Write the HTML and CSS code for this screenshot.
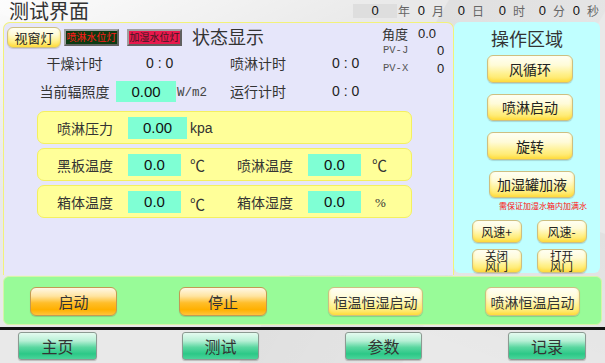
FILE: index.html
```html
<!DOCTYPE html>
<html lang="zh-CN">
<head>
<meta charset="utf-8">
<title>测试界面</title>
<link rel="stylesheet" href="styles.css">
</head>
<body>
<header class="topbar">
  <h1 class="title">测试界面</h1>
  <div class="clock">
    <span class="num yearbox">0</span><span class="unit">年</span>
    <span class="num w22">0</span><span class="unit">月</span>
    <span class="num w28">0</span><span class="unit">日</span>
    <span class="num w29">0</span><span class="unit">时</span>
    <span class="num w28">0</span><span class="unit">分</span>
    <span class="num w22">0</span><span class="unit">秒</span>
  </div>
</header>

<div class="main">
  <section class="status">
    <div class="status-top">
      <div class="status-main">
        <div class="row row1">
          <button class="btn-y lamp-btn">视窗灯</button>
          <span class="lamp lamp-green">喷淋水位灯</span>
          <span class="lamp lamp-red">加湿水位灯</span>
          <span class="status-title">状态显示</span>
        </div>
        <div class="row info-row">
          <span class="lbl">干燥计时</span>
          <span class="cell2"><span class="timer t1">0 : 0</span></span>
          <span class="lbl3">喷淋计时</span>
          <span class="timer">0 : 0</span>
        </div>
        <div class="row info-row">
          <span class="lbl">当前辐照度</span>
          <span class="cell2"><span class="vbox vbox-irr">0.00</span><span class="mono-unit">W/m2</span></span>
          <span class="lbl3">运行计时</span>
          <span class="timer">0 : 0</span>
        </div>
      </div>
      <div class="gauge">
        <div class="g-line g1"><span class="g-lbl">角度</span><span class="g-val">0.0</span></div>
        <div class="g-line g2"><span class="pv">PV-J</span><span class="pv-val">0</span></div>
        <div class="g-line g3"><span class="pv">PV-X</span><span class="pv-val">0</span></div>
      </div>
    </div>

    <div class="yrows">
      <div class="yrow">
        <span class="y-lbl">喷淋压力</span>
        <span class="y-box"><span class="vbox wide">0.00</span></span>
        <span class="y-unit kpa">kpa</span>
      </div>
      <div class="yrow">
        <span class="y-lbl">黑板温度</span>
        <span class="y-box"><span class="vbox">0.0</span></span>
        <span class="y-unit">℃</span>
        <span class="y-lbl2">喷淋温度</span>
        <span class="y-box2"><span class="vbox">0.0</span></span>
        <span class="y-unit2">℃</span>
      </div>
      <div class="yrow">
        <span class="y-lbl">箱体温度</span>
        <span class="y-box"><span class="vbox">0.0</span></span>
        <span class="y-unit low">℃</span>
        <span class="y-lbl2">箱体湿度</span>
        <span class="y-box2"><span class="vbox">0.0</span></span>
        <span class="y-unit2 pct">%</span>
      </div>
    </div>
  </section>

  <aside class="ops">
    <h2 class="ops-title">操作区域</h2>
    <button class="btn-y op-btn">风循环</button>
    <button class="btn-y op-btn">喷淋启动</button>
    <button class="btn-y op-btn">旋转</button>
    <button class="btn-y op-btn">加湿罐加液</button>
    <p class="warn">需保证加湿水箱内加满水</p>
    <div class="small-grid">
      <button class="btn-y sm-btn">风速+</button>
      <button class="btn-y sm-btn">风速-</button>
      <button class="btn-y sm-btn two">关闭<br>风门</button>
      <button class="btn-y sm-btn two">打开<br>风门</button>
    </div>
  </aside>
</div>

<div class="actions">
  <button class="btn-o act a1">启动</button>
  <button class="btn-o act a2">停止</button>
  <button class="btn-y act a3">恒温恒湿启动</button>
  <button class="btn-y act a4">喷淋恒温启动</button>
</div>

<div class="divider"></div>

<nav class="nav">
  <button class="btn-g n1">主页</button>
  <button class="btn-g n2">测试</button>
  <button class="btn-g n3">参数</button>
  <button class="btn-g n4">记录</button>
</nav>
</body>
</html>
```

FILE: styles.css
```css
* { box-sizing: border-box; margin: 0; padding: 0; }
html, body { width: 605px; height: 363px; overflow: hidden; }
body {
  font-family: "Liberation Sans", "Noto Sans CJK SC", sans-serif;
  color: #222;
  background:
    linear-gradient(155deg, rgba(255,255,255,0.9) 0%, rgba(255,255,255,0) 30%),
    linear-gradient(120deg, rgba(0,0,0,0) 55%, rgba(0,0,0,0.04) 55.2%, rgba(0,0,0,0.02) 75%, rgba(0,0,0,0) 75.2%),
    linear-gradient(200deg, rgba(0,0,0,0) 40%, rgba(0,0,0,0.035) 40.2%, rgba(0,0,0,0) 70%),
    #e9e9e9;
}
button { font-family: inherit; color: inherit; cursor: pointer; }

/* header */
.topbar { height: 22px; display: flex; justify-content: space-between; align-items: center; }
.title {
  font-family: "Noto Sans CJK SC", sans-serif;
  font-weight: 400; font-size: 20px; line-height: 22px;
  color: #333; padding-left: 9px;
}
.clock { display: flex; align-items: center; padding-right: 6px; height: 14px; margin-top: -1px; }
.num { font-size: 13px; line-height: 14px; color: #111; text-align: right; padding-right: 7px; }
.yearbox { width: 44px; height: 14px; background: #dedede; text-align: center; padding-right: 0; margin-right: 1px; }
.w22 { width: 22px; }
.w28 { width: 28px; }
.w29 { width: 29px; }
.unit { font-family: "Noto Sans CJK SC", sans-serif; font-size: 12px; line-height: 14px; color: #666; width: 12px; }

/* main */
.main { display: flex; height: 253px; padding-left: 3px; }
.status {
  width: 451px; height: 253px;
  background: #e6e6fa;
  border: 1px solid #f2f27a; border-bottom: none;
  border-radius: 7px 7px 0 0;
}
.status-top { display: flex; }
.status-main { width: 371px; padding-top: 3px; }
.row { display: flex; align-items: center; }
.row1 { height: 22px; }
.lamp-btn { margin-left: 3px; width: 54px; height: 21px; font-size: 13px; font-family: "Noto Sans CJK SC", sans-serif; }
.lamp {
  display: flex; align-items: center; justify-content: center;
  height: 17px; width: 55px;
  font-family: "Noto Sans CJK SC", sans-serif; font-size: 10px; line-height: 1;
  border: 2px solid #8a8a8a; border-color: #a0a0a0 #606060 #606060 #a0a0a0;
}
.lamp-green { margin-left: 3px; background: #0c3a12; color: #ff1a1a; }
.lamp-red { margin-left: 8px; background: #e8184c; color: #3a1a22; }
.status-title { margin-left: 10px; font-family: "Noto Sans CJK SC", sans-serif; font-size: 18px; color: #333; line-height: 22px; margin-top: -2px; }

.info-row { height: 28px; font-family: "Noto Sans CJK SC", sans-serif; font-size: 14px; color: #333; }
.info-row:nth-child(2) { margin-top: 1px; }
.lbl { margin-left: 33px; width: 75px; text-align: center; }
.cell2 { width: 118px; display: flex; align-items: center; }
.t1 { padding-left: 34px; }
.timer { font-family: "Liberation Sans", sans-serif; font-size: 14px; color: #222; }
.lbl3 { width: 102px; }
.vbox {
  display: flex; align-items: center; justify-content: center;
  width: 53px; height: 22px; background: #7fffd4;
  font-family: "Liberation Sans", sans-serif; font-size: 15px; color: #111;
}
.vbox-irr { width: 60px; height: 21px; margin-left: 4px; }
.vbox.wide { width: 59px; }
.mono-unit { margin-left: 1px; margin-top: 3px; font-family: "Liberation Mono", monospace; font-size: 12.5px; color: #444; }

.gauge { width: 78px; padding-left: 7px; padding-top: 3px; }
.g-line { display: flex; align-items: center; }
.g1 { height: 14px; }
.g2 { height: 16px; margin-top: 2px; }
.g3 { height: 16px; margin-top: 2px; }
.g-lbl { width: 36px; font-family: "Noto Sans CJK SC", sans-serif; font-size: 13px; color: #333; }
.g-val { font-size: 13px; color: #222; }
.pv { width: 55px; padding-left: 1px; font-family: "Liberation Mono", monospace; font-size: 10.5px; color: #555; }
.pv-val { font-size: 13px; color: #222; }

.yrows { display: flex; flex-direction: column; gap: 4px; margin-top: 6px; margin-left: 33px; }
.yrow {
  width: 375px; height: 33px;
  display: grid; grid-template-columns: 90px 62px 47px 71px 59px auto; align-items: center;
  background: #ffff99; border: 1px solid #f4f060; border-radius: 7px;
  font-family: "Noto Sans CJK SC", sans-serif; font-size: 14px; color: #333;
}
.y-lbl { padding-left: 19px; }
.y-box, .y-box2 { display: flex; }
.y-unit { font-size: 15px; color: #333; }
.y-unit.kpa { font-family: "Liberation Sans", sans-serif; font-size: 14px; }
.y-unit.low { padding-top: 4px; }
.y-unit2 { font-size: 15px; padding-left: 5px; }
.y-unit2.pct { padding-left: 8px; font-family: "Liberation Serif", serif; font-size: 13px; padding-top: 3px; }

/* ops */
.ops {
  width: 146px; height: 251px;
  background: #c0ffff; border-radius: 6px;
  display: flex; flex-direction: column; align-items: center;
  padding-left: 6px;
}
.ops-title {
  font-family: "Noto Sans CJK SC", sans-serif; font-weight: 400;
  font-size: 18px; line-height: 24px; color: #333;
  margin-top: 4px; margin-left: -6px; margin-bottom: 5px;
}
.op-btn { width: 86px; height: 28px; font-size: 14px; font-family: "Noto Sans CJK SC", sans-serif; margin-bottom: 11px; }
.op-btn:nth-of-type(4) { margin-bottom: 3px; margin-left: 4px; }
.warn {
  align-self: flex-start; margin-left: 39px;
  font-family: "Noto Sans CJK SC", sans-serif; font-size: 8px; line-height: 10px;
  color: #ff1010; white-space: nowrap;
}
.small-grid {
  margin-top: 9px; margin-left: -2px;
  display: grid; grid-template-columns: 50px 50px; column-gap: 15px; row-gap: 6px;
}
.sm-btn { height: 23px; font-size: 12px; font-family: "Noto Sans CJK SC", sans-serif; line-height: 1; }
.sm-btn.two { height: 24px; line-height: 11px; font-size: 11.5px; }

/* button skins */
.btn-y {
  border: 1px solid #cdbf82; border-radius: 6px;
  background: linear-gradient(180deg, #fffff4 0%, #fffbd8 35%, #fff08a 70%, #ffe45a 100%);
  box-shadow: inset 0 -2px 3px rgba(255, 214, 40, 0.6), 0 1px 1px rgba(0,0,0,0.15);
}
.btn-o {
  border: 1px solid #c39a52; border-radius: 6px;
  background: linear-gradient(180deg, #fff8e6 0%, #ffe4a0 30%, #ffbe2a 55%, #ffb000 80%, #ffc43a 100%);
  box-shadow: 0 1px 1px rgba(0,0,0,0.15);
}
.btn-g {
  border: 1px solid #8c9a92; border-radius: 3px;
  background: linear-gradient(180deg, #e4fbf0 0%, #b8f0d6 30%, #5ad7a0 55%, #2cc887 80%, #4ad49a 100%);
  box-shadow: 0 1px 1px rgba(0,0,0,0.2);
}

/* actions */
.actions {
  margin: 1px 3px 0 3px; height: 49px; width: 599px;
  background: #98fb98; border: 1px solid #d6f5a8; border-radius: 6px;
  display: flex; align-items: flex-start; padding-top: 10px;
}
.act { height: 29px; font-family: "Noto Sans CJK SC", sans-serif; color: #333; }
.a1 { margin-left: 26px; width: 87px; font-size: 15px; }
.a2 { margin-left: 62px; width: 88px; font-size: 15px; }
.a3 { margin-left: 61px; width: 95px; font-size: 14px; }
.a4 { margin-left: 62px; width: 95px; font-size: 14px; }

.divider { margin-top: 2px; height: 3px; background: #111; }

.nav { display: flex; margin-top: 2px; }
.nav .btn-g { height: 28px; font-family: "Noto Sans CJK SC", sans-serif; font-size: 16px; color: #333; }
.n1 { margin-left: 18px; width: 79px; }
.n2 { margin-left: 85px; width: 77px; }
.n3 { margin-left: 86px; width: 77px; }
.n4 { margin-left: 86px; width: 78px; }
```
